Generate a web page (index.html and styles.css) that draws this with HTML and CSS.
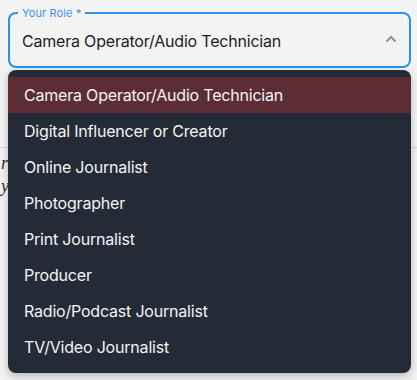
FILE: index.html
```html
<!DOCTYPE html>
<html lang="en">
  <head>
    <meta charset="UTF-8" />
    <title>Role Select</title>
    <link rel="stylesheet" href="styles.css">
  </head>
  <body>
    <div class="page">
      <div class="behind">
        <div class="behind-top"></div>
        <div class="behind-note">
          <p>r</p>
          <p>y</p>
        </div>
      </div>

      <div class="field">
        <fieldset class="select-box">
          <legend>Your Role *</legend>
          <span class="value">Camera Operator/Audio Technician</span>
          <svg class="chevron" width="14" height="14" viewBox="0 0 14 14">
            <path d="M2.5 9.5 L7 5 L11.5 9.5" fill="none" stroke="#8b929b" stroke-width="2" />
          </svg>
        </fieldset>

        <ul class="menu">
          <li class="active">Camera Operator/Audio Technician</li>
          <li>Digital Influencer or Creator</li>
          <li>Online Journalist</li>
          <li>Photographer</li>
          <li>Print Journalist</li>
          <li>Producer</li>
          <li>Radio/Podcast Journalist</li>
          <li>TV/Video Journalist</li>
        </ul>
      </div>
    </div>
  </body>
</html>
```

FILE: styles.css
```css
* {
  box-sizing: border-box;
}

body {
  margin: 0;
  background-color: #f3f3f3;
  font-family: Inter, Roboto, "Liberation Sans", sans-serif;
}

.page {
  position: relative;
  width: 417px;
  height: 380px;
  overflow: hidden;
}

.behind {
  padding-top: 147px;
}

.behind-top {
  border-top: 1px solid #d9d9d9;
}

.behind-note {
  padding: 4px 0 0 1px;
  font-family: "Liberation Serif", serif;
  font-style: italic;
  font-size: 18px;
  line-height: 23px;
  color: #333;
}

.behind-note p {
  margin: 0;
}

.field {
  position: absolute;
  top: 6px;
  left: 8px;
  width: 403px;
}

.select-box {
  margin: 0;
  height: 62px;
  padding: 0 12px 4px 12px;
  border: 2px solid #2f8ef0;
  border-radius: 8px;
  background-color: #f3f3f3;
  display: flex;
  align-items: center;
  justify-content: space-between;
}

.select-box legend {
  padding: 0 4px;
  margin-left: -4px;
  font-size: 11px;
  letter-spacing: 0.1px;
  color: #3b93ee;
}

.value {
  font-size: 16px;
  letter-spacing: -0.2px;
  color: #1d1d1f;
}

.chevron {
  margin-right: -1px;
  margin-top: -4px;
}

.menu {
  position: absolute;
  top: 64px;
  left: 0;
  right: 0;
  margin: 0;
  padding: 7px 0 8px;
  list-style: none;
  background-color: #252b36;
  border-radius: 8px;
  box-shadow: 0 3px 8px rgba(0, 0, 0, 0.25);
}

.menu li {
  height: 36px;
  line-height: 37px;
  padding-left: 16px;
  font-size: 16px;
  letter-spacing: -0.2px;
  color: #f2f3f5;
}

.menu li.active {
  background-color: #5c2d35;
}
```
